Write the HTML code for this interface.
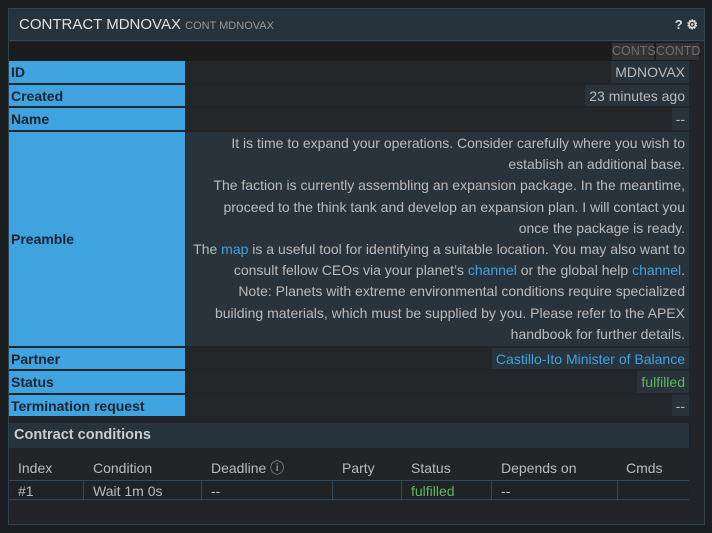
<!DOCTYPE html>
<html><head><style>
*{margin:0;padding:0;box-sizing:border-box}
body{width:712px;height:533px;background:#1b1e20;font-family:"Liberation Sans",sans-serif;font-size:14px;color:#bbb;position:relative;overflow:hidden}
.win{position:absolute;left:8px;top:8px;width:697px;height:517px;background:#222427;border:1px solid #2e4352}
.title{position:absolute;left:0;top:0;width:695px;height:32px;background:#26333d;border-bottom:1px solid #2f4a5e;color:#e0e0e0;font-size:15px;line-height:32px;padding-left:10px}
.title small{font-size:11px;color:#999}
.icons{position:absolute;right:6px;top:0;color:#ddd;font-weight:bold;font-size:13px}
.tb{position:absolute;top:33px;left:0;width:687px;height:19px;background:#1c1c1c}
.btn{position:absolute;top:1px;height:17px;background:#333;color:#6f6f6f;font-size:12.5px;line-height:17px;text-align:center}
.row{position:absolute;left:0;width:680px}
.lab{position:absolute;left:0;top:0;bottom:0;width:176px;background:#3fa3df;color:#1a2430;font-weight:bold;font-size:14px;padding-left:2px;display:flex;align-items:center}
.val{position:absolute;left:177px;right:0;top:0;bottom:0;background:#232729}
.box{position:absolute;right:0;top:0;bottom:0;background:#28333c;padding:0 4px;display:flex;align-items:center;white-space:nowrap}
.pre{position:absolute;left:0;right:0;top:0;bottom:0;background:#28333c;text-align:right;padding:1px 4px 0 0;line-height:21.2px;white-space:nowrap}
a{color:#3fa3df;text-decoration:none}
.g{color:#5cb85c}
.cc{position:absolute;left:0;top:414px;width:680px;height:25px;background:#26333d;color:#ccc;font-weight:bold;font-size:14.5px;line-height:25px;padding-left:5px}
.th,.tr{position:absolute;left:0;width:680px;height:20px;font-size:14px;line-height:20px}
.th span,.tr span{position:absolute;top:0;height:20px;padding-left:9px}
.tr{border-top:1px solid #2f4a5e;border-bottom:1px solid #2f4a5e;background:#202326}
.tr span{border-right:1px solid #2f4a5e}
</style></head><body>
<div class="win">
<div class="title">CONTRACT MDNOVAX <small>CONT MDNOVAX</small><div class="icons">? &#9881;</div></div>
<div class="tb"><div class="btn" style="left:603px;width:42px">CONTS</div><div class="btn" style="left:647px;width:43px">CONTD</div></div>
<div class="row" style="top:52px;height:22px"><div class="lab">ID</div><div class="val"><div class="box">MDNOVAX</div></div></div>
<div class="row" style="top:76px;height:21px"><div class="lab">Created</div><div class="val"><div class="box">23 minutes ago</div></div></div>
<div class="row" style="top:99px;height:22px"><div class="lab">Name</div><div class="val"><div class="box">--</div></div></div>
<div class="row" style="top:123px;height:214px"><div class="lab">Preamble</div><div class="val"><div class="pre">It is time to expand your operations. Consider carefully where you wish to<br>establish an additional base.<br>The faction is currently assembling an expansion package. In the meantime,<br>proceed to the think tank and develop an expansion plan. I will contact you<br>once the package is ready.<br>The <a>map</a> is a useful tool for identifying a suitable location. You may also want to<br>consult fellow CEOs via your planet’s <a>channel</a> or the global help <a>channel</a>.<br>Note: Planets with extreme environmental conditions require specialized<br>building materials, which must be supplied by you. Please refer to the APEX<br>handbook for further details.</div></div></div>
<div class="row" style="top:339px;height:21px"><div class="lab">Partner</div><div class="val"><div class="box"><a>Castillo-Ito Minister of Balance</a></div></div></div>
<div class="row" style="top:362px;height:22px"><div class="lab">Status</div><div class="val"><div class="box g">fulfilled</div></div></div>
<div class="row" style="top:386px;height:21px"><div class="lab">Termination request</div><div class="val"><div class="box">--</div></div></div>
<div class="cc">Contract conditions</div>
<div class="th" style="top:449px"><span style="left:0">Index</span><span style="left:75px">Condition</span><span style="left:193px">Deadline &#9432;</span><span style="left:324px">Party</span><span style="left:393px">Status</span><span style="left:483px">Depends on</span><span style="left:608px">Cmds</span></div>
<div class="tr" style="top:471px"><span style="left:0;width:75px">#1</span><span style="left:75px;width:118px">Wait 1m 0s</span><span style="left:193px;width:131px">--</span><span style="left:324px;width:69px"></span><span style="left:393px;width:90px" class="g">fulfilled</span><span style="left:483px;width:126px">--</span></div>
</div>
</body></html>
